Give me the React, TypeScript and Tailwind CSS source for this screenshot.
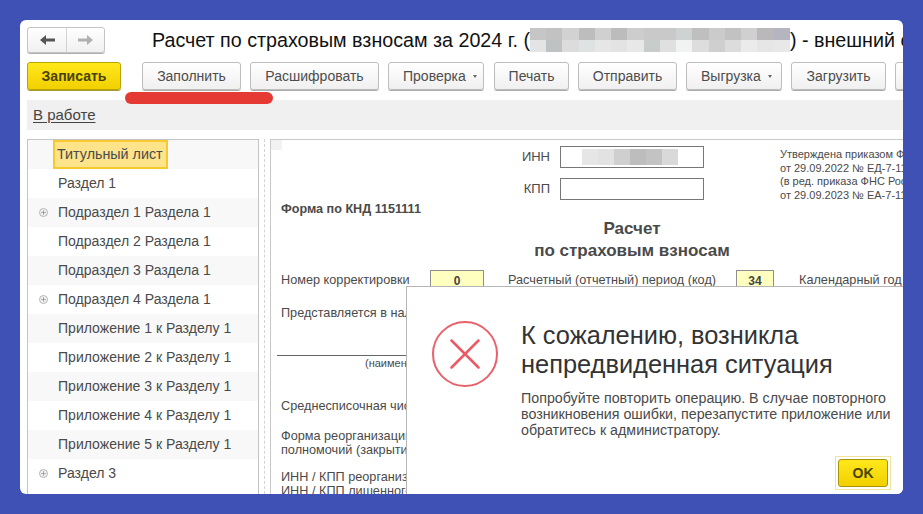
import { Plus, X } from "lucide-react";

const tree = [
  { label: "Титульный лист", active: true },
  { label: "Раздел 1" },
  { label: "Подраздел 1 Раздела 1", plus: true },
  { label: "Подраздел 2 Раздела 1" },
  { label: "Подраздел 3 Раздела 1" },
  { label: "Подраздел 4 Раздела 1", plus: true },
  { label: "Приложение 1 к Разделу 1" },
  { label: "Приложение 2 к Разделу 1" },
  { label: "Приложение 3 к Разделу 1" },
  { label: "Приложение 4 к Разделу 1" },
  { label: "Приложение 5 к Разделу 1" },
  { label: "Раздел 3", plus: true },
];

const titleBlur = [
  ["#c6c6c6", "#c2c2c2", "#d2d2d2", "#bdbdbd", "#d0d0d0", "#bcbcbc", "#cdcdcd", "#c9c9c9", "#c9c9c9", "#cfd2d2", "#bfbfbf", "#cbcbcb", "#c2c2c2", "#d0d0d0", "#bab8bb", "#b5b5c0"],
  ["#e4e4e4", "#bfc2c2", "#dcdcdc", "#dfe2e2", "#e6e6e6", "#e3e3e3", "#e8e8e8", "#c8cccb", "#e0e0e0", "#f1f3f3", "#dddddd", "#cfcfcf", "#dcdcdc", "#ebebeb", "#e6e6e6", "#e8e8e8"],
];

function ToolButton({ label, caret, className }: { label: string; caret?: boolean; className: string }) {
  return (
    <button
      className={`flex h-7 shrink-0 items-center rounded-[3px] border border-[#bdbdbd] bg-gradient-to-b from-white to-[#f0f0f0] text-[14px] text-[#4d4d4d] shadow-[0_1px_0_#ababab] ${
        caret ? "gap-[7px] pl-[14px]" : "justify-center"
      } ${className}`}
    >
      {label}
      {caret && <span className="mt-px h-0 w-0 border-x-[2.5px] border-t-[3px] border-x-transparent border-t-[#666]" />}
    </button>
  );
}

function YellowBox({ value, className }: { value: string; className: string }) {
  return (
    <div className={`flex h-[22px] shrink-0 items-center justify-center border border-[#8f8f8f] bg-[#ffffc0] text-[12px] font-bold text-[#444] ${className}`}>
      {value}
    </div>
  );
}

export default function App() {
  return (
    <div className="h-[514px] w-[923px] overflow-hidden bg-[#3f51b5] p-5 font-['Liberation_Sans',sans-serif]">
      <div className="relative flex h-[474px] w-[883px] flex-col overflow-hidden rounded-[6px] bg-white pl-[7px] pt-[7px]">
        <div className="flex h-[26px] shrink-0 items-center whitespace-nowrap">
          <div className="flex h-[26px] w-[78px] shrink-0 rounded-[3px] border border-[#c4c4c4] bg-gradient-to-b from-white to-[#f0f0f0] shadow-[0_1px_0_#b0b0b0]">
            <div className="flex w-[39px] items-center justify-center border-r border-[#d2d2d2]">
              <svg width="15" height="10" viewBox="0 0 15 10" fill="#555">
                <path d="M0 5 L6 0 V3.4 H15 V6.6 H6 V10 Z" />
              </svg>
            </div>
            <div className="flex flex-1 items-center justify-center">
              <svg width="15" height="10" viewBox="0 0 15 10" fill="#b0b0b0">
                <path d="M15 5 L9 0 V3.4 H0 V6.6 H9 V10 Z" />
              </svg>
            </div>
          </div>
          <div className="ml-[47px] flex items-center text-[19.7px] text-[#111]">
            <span className="pt-px">Расчет по страховым взносам за 2024 г. (</span>
            <div className="flex w-[260px] shrink-0 flex-col">
              {titleBlur.map((row, i) => (
                <div key={i} className="flex h-3">
                  {row.map((c, j) => (
                    <div key={j} className="h-3 flex-1" style={{ backgroundColor: c }} />
                  ))}
                </div>
              ))}
            </div>
            <span className="pt-px">) - внешний с</span>
          </div>
        </div>

        <div className="mt-[9px] flex h-7 shrink-0">
          <button className="h-7 w-[94px] shrink-0 rounded-[3px] border border-[#b8a400] bg-gradient-to-b from-[#ffe81a] to-[#f2d000] text-[14px] font-bold text-[#4a4300] shadow-[0_1px_0_#a89a30]">
            Записать
          </button>
          <ToolButton label="Заполнить" className="ml-[21px] w-[99px]" />
          <ToolButton label="Расшифровать" className="ml-[9px] w-[129px]" />
          <ToolButton label="Проверка" caret className="ml-[9px] w-[96px]" />
          <ToolButton label="Печать" className="ml-[10px] w-[75px]" />
          <ToolButton label="Отправить" className="ml-[9px] w-[99px]" />
          <ToolButton label="Выгрузка" caret className="ml-[9px] w-[96px]" />
          <ToolButton label="Загрузить" className="ml-[9px] w-[95px]" />
          <ToolButton label="" className="ml-[9px] w-[40px]" />
        </div>

        <div className="mt-[10px] flex h-[30px] shrink-0 items-center bg-[#f0f0f0] pl-[6px] text-[15px] text-[#444]">
          <span className="underline underline-offset-2">В работе</span>
        </div>

        <div className="mt-[9px] flex min-h-0 flex-1">
          <div className="w-[232px] shrink-0 border border-b-0 border-[#c4c4c4]">
            {tree.map((item, i) => (
              <div key={item.label} className={`flex h-[29px] items-center ${i % 2 === 0 ? "bg-[#f8f8f8]" : "bg-white"}`}>
                <div className="flex w-[30px] shrink-0 justify-center pl-[1px]">
                  {item.plus && (
                    <span className="flex h-[9px] w-[9px] items-center justify-center rounded-full border border-[#b5b5b5] bg-[#f2f2f2]">
                      <Plus size={7} strokeWidth={2} color="#777" />
                    </span>
                  )}
                </div>
                {item.active ? (
                  <span className="-ml-[5px] flex h-[29px] items-center border-[2px] border-[#f6c92f] bg-[#fde38a] pl-[2px] pr-[3px] text-[14.3px] text-[#4a4a4a]">
                    {item.label}
                  </span>
                ) : (
                  <span className="text-[14.05px] text-[#4a4a4a]">{item.label}</span>
                )}
              </div>
            ))}
          </div>

          <div className="flex w-[11px] shrink-0 justify-center">
            <div className="h-full border-l border-dashed border-[#d4d4d4]" />
          </div>

          <div className="relative min-w-0 flex-1 border-l border-t border-[#c8c8c8] text-[#4a4a4a]">
            <div className="h-[10px] w-[11px] bg-[#f2f2f2]" />

            <div className="mt-[-4px] flex h-[62px]">
              <div className="flex w-[433px] shrink-0 flex-col items-end gap-[10px]">
                <div className="flex h-[22px] items-center gap-[10px] text-[13px]">
                  <span>ИНН</span>
                  <div className="flex h-[22px] w-[144px] items-center border border-[#777] pl-[21px]">
                    <div className="flex h-4">
                      {["#e6e6e6", "#e2e2e2", "#cfcfcf", "#bdbdbd", "#c3c3c3", "#d9d9d9"].map((c, i) => (
                        <div key={i} className="h-4 w-4" style={{ backgroundColor: c }} />
                      ))}
                    </div>
                  </div>
                </div>
                <div className="flex h-[22px] items-center gap-[10px] text-[13px]">
                  <span>КПП</span>
                  <div className="h-[22px] w-[144px] border border-[#777]" />
                </div>
              </div>
              <div className="ml-[76px] whitespace-nowrap pt-[2px] text-[11px] leading-[13.5px]">
                <p>Утверждена приказом ФНС России</p>
                <p>от 29.09.2022 № ЕД-7-11/878@</p>
                <p>(в ред. приказа ФНС России</p>
                <p>от 29.09.2023 № ЕА-7-11/696@)</p>
              </div>
            </div>

            <p className="-mt-[6px] pl-[10px] text-[12.6px] font-bold leading-[14px]">Форма по КНД 1151111</p>

            <div className="ml-[261px] mt-[2px] w-[200px] whitespace-nowrap text-center text-[17px] font-bold leading-[22px]">
              <p>Расчет</p>
              <p>по страховым взносам</p>
            </div>

            <div className="mt-[8px] flex h-[22px] items-center whitespace-nowrap pl-[10px] text-[12.7px]">
              <span className="w-[149px] shrink-0">Номер корректировки</span>
              <YellowBox value="0" className="w-[54px]" />
              <span className="ml-[24px] w-[228px] shrink-0">Расчетный (отчетный) период (код)</span>
              <YellowBox value="34" className="w-[38px]" />
              <span className="ml-[25px]">Календарный год</span>
            </div>

            <p className="mt-[14px] whitespace-nowrap pl-[10px] text-[12.7px] leading-[15px]">Представляется в налоговый орган</p>

            <div className="ml-[6px] mt-[34px] border-t border-[#666]" />
            <p className="pl-[94px] text-[11px] leading-[14px]">(наименование организации)</p>

            <p className="mt-[29px] whitespace-nowrap pl-[10px] text-[12.7px] leading-[15px]">Среднесписочная численность</p>
            <div className="mt-[15px] whitespace-nowrap pl-[10px] text-[12.7px] leading-[14px]">
              <p>Форма реорганизации, лишение</p>
              <p>полномочий (закрытие)</p>
            </div>
            <div className="mt-[14px] whitespace-nowrap pl-[10px] text-[12.7px] leading-[13.5px]">
              <p>ИНН / КПП реорганизованной</p>
              <p>ИНН / КПП лишенного</p>
            </div>
          </div>
        </div>

        {/* red marker under the button */}
        <div className="absolute left-[105px] top-[72px] h-3 w-[148px] rounded-full bg-[#e53a33]" />

        {/* error dialog */}
        <div className="absolute bottom-0 left-[386px] right-0 top-[266px] border-l border-t border-[#b5b5b5] bg-white">
          <div className="flex pl-[25px] pt-[34px]">
            <div className="flex h-[66px] w-[66px] shrink-0 items-center justify-center rounded-full border-[2px] border-[#e8616b]">
              <X size={54} strokeWidth={1.1} color="#ea5a65" />
            </div>
            <div className="ml-[23px]">
              <h1 className="whitespace-nowrap text-[25.4px] leading-[29px] text-[#333]">
                К сожалению, возникла
                <br />
                непредвиденная ситуация
              </h1>
              <p className="mt-[11px] whitespace-nowrap text-[14.25px] leading-[16px] text-[#4a4a4a]">
                Попробуйте повторить операцию. В случае повторного
                <br />
                возникновения ошибки, перезапустите приложение или
                <br />
                обратитесь к администратору.
              </p>
            </div>
          </div>
          <div className="absolute bottom-[4px] right-[12px] border border-[#f0e39a] p-[2px]">
            <button className="h-[28px] w-[50px] rounded-[3px] border border-[#a89400] bg-gradient-to-b from-[#ffe81a] to-[#f2d000] text-[14px] font-bold text-[#4a4300]">
              OK
            </button>
          </div>
        </div>
      </div>
    </div>
  );
}
